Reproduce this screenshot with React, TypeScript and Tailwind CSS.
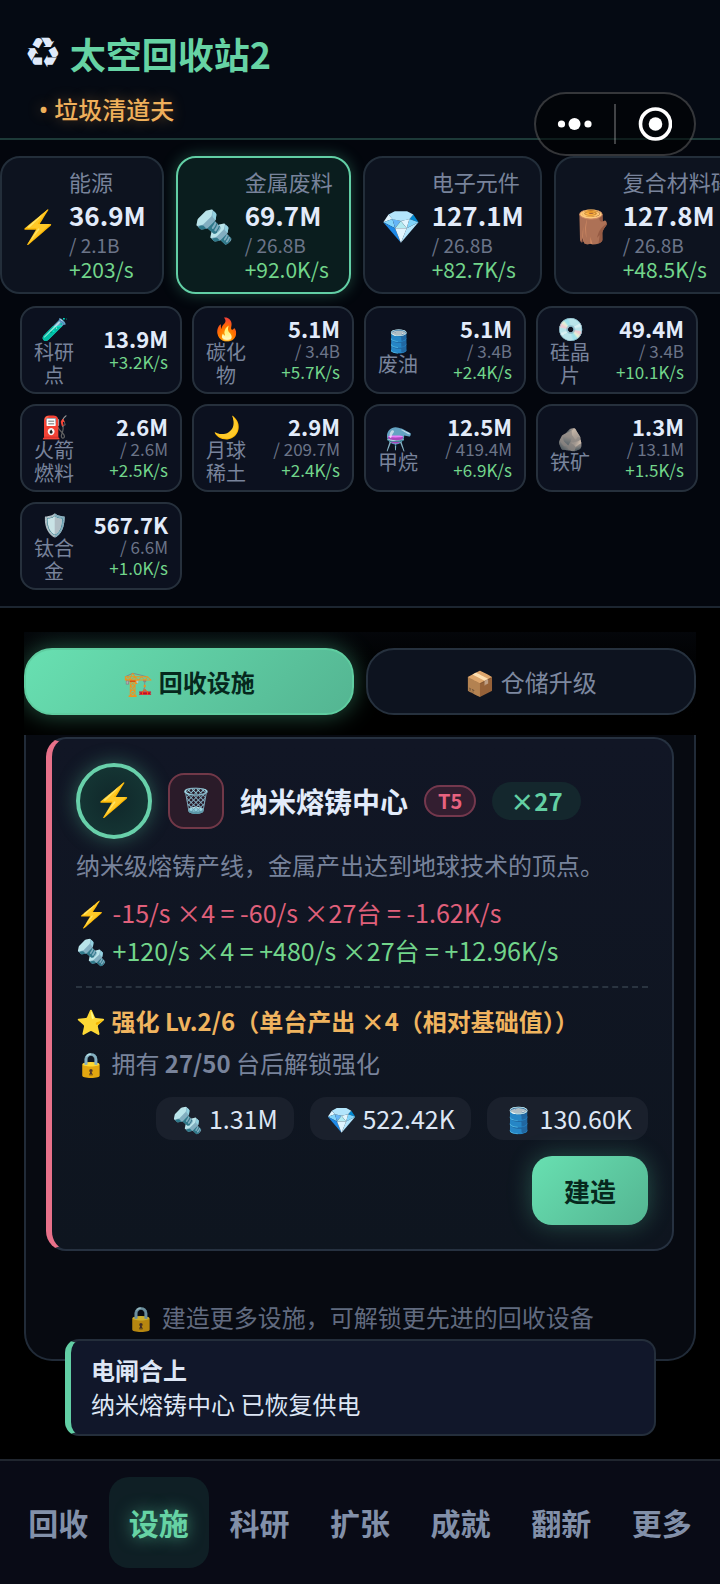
import React from 'react';

interface Resource {
  icon: string;
  name: string;
  value: string;
  cap?: string;
  rate: string;
  active?: boolean;
}

const mainResources: Resource[] = [
  { icon: '⚡', name: '能源', value: '36.9M', cap: '2.1B', rate: '+203/s' },
  { icon: '🔩', name: '金属废料', value: '69.7M', cap: '26.8B', rate: '+92.0K/s', active: true },
  { icon: '💎', name: '电子元件', value: '127.1M', cap: '26.8B', rate: '+82.7K/s' },
  { icon: '🪵', name: '复合材料碎片', value: '127.8M', cap: '26.8B', rate: '+48.5K/s' },
];

const minorResources: Resource[] = [
  { icon: '🧪', name: '科研点', value: '13.9M', rate: '+3.2K/s' },
  { icon: '🔥', name: '碳化物', value: '5.1M', cap: '3.4B', rate: '+5.7K/s' },
  { icon: '🛢️', name: '废油', value: '5.1M', cap: '3.4B', rate: '+2.4K/s' },
  { icon: '💿', name: '硅晶片', value: '49.4M', cap: '3.4B', rate: '+10.1K/s' },
  { icon: '⛽', name: '火箭燃料', value: '2.6M', cap: '2.6M', rate: '+2.5K/s' },
  { icon: '🌙', name: '月球稀土', value: '2.9M', cap: '209.7M', rate: '+2.4K/s' },
  { icon: '⚗️', name: '甲烷', value: '12.5M', cap: '419.4M', rate: '+6.9K/s' },
  { icon: '🪨', name: '铁矿', value: '1.3M', cap: '13.1M', rate: '+1.5K/s' },
  { icon: '🛡️', name: '钛合金', value: '567.7K', cap: '6.6M', rate: '+1.0K/s' },
];

const costs = [
  { icon: '🔩', amount: '1.31M' },
  { icon: '💎', amount: '522.42K' },
  { icon: '🛢️', amount: '130.60K' },
];

const navItems = ['回收', '设施', '科研', '扩张', '成就', '翻新', '更多'];

const Capsule: React.FC = () => (
  <div className="absolute right-6 top-[92px] z-20 flex h-16 w-[162px] items-center rounded-full border-2 border-white/20 bg-black/50">
    <button type="button" aria-label="菜单" className="flex h-full flex-1 items-center justify-center">
      <svg width="36" height="14" viewBox="0 0 36 14" fill="#fff">
        <circle cx="4.5" cy="7" r="3.6" />
        <circle cx="17.5" cy="7" r="6" />
        <circle cx="31" cy="7" r="3.6" />
      </svg>
    </button>
    <span className="h-10 w-0.5 bg-white/25" />
    <button type="button" aria-label="关闭" className="flex h-full flex-1 items-center justify-center">
      <svg width="34" height="34" viewBox="0 0 34 34">
        <circle cx="17.5" cy="17" r="15" fill="none" stroke="#fff" strokeWidth="3.6" />
        <circle cx="17.5" cy="17" r="6.8" fill="#fff" />
      </svg>
    </button>
  </div>
);

const MainCard: React.FC<{ item: Resource }> = ({ item }) => (
  <div
    className={`flex shrink-0 items-center gap-[11px] rounded-[20px] border-2 px-4 pt-2 pb-[10px] ${
      item.active
        ? 'border-[#62cfa5] bg-[#0a1d1e] shadow-[0_0_16px_rgba(94,220,170,0.3)]'
        : 'border-[#232e3a] bg-[#0d131f]'
    }`}
  >
    <span className="w-10 text-center text-[32px] leading-10">{item.icon}</span>
    <div className="whitespace-nowrap">
      <div className="text-[22px] leading-[30px] text-[#78839b]">{item.name}</div>
      <div className="text-[26px] leading-[38px] font-bold text-[#e2ebfa]">{item.value}</div>
      <div className="text-[19px] leading-[22px] text-[#6b7488]">/ {item.cap}</div>
      <div className="text-[21px] leading-[26px] text-[#72d58b]">{item.rate}</div>
    </div>
  </div>
);

const MinorCard: React.FC<{ item: Resource }> = ({ item }) => (
  <div className="flex h-[88px] items-center justify-between rounded-2xl border-2 border-[#26303c] bg-[#0c111f] px-3">
    <div className="w-10 text-center text-[20px] text-[#78839b]">
      <div className="flex justify-center text-[22px] leading-[26px]">{item.icon}</div>
      <div className="leading-[23px]">{item.name}</div>
    </div>
    <div className="pb-0.5 text-right whitespace-nowrap">
      <div className="text-[22px] leading-[26px] font-bold text-[#e2ebfa]">{item.value}</div>
      {item.cap && <div className="text-[17px] leading-5 text-[#6b7488]">/ {item.cap}</div>}
      <div className="text-[17px] leading-[22px] text-[#72d58b]">{item.rate}</div>
    </div>
  </div>
);

const FacilityCard: React.FC = () => (
  <article className="rounded-[20px] border-2 border-l-[6px] border-[#263140] border-l-[#e8718a] bg-linear-to-b from-[#111625] to-[#0e151f] p-6 text-[24px]">
    <div className="flex items-center gap-4">
      <button
        type="button"
        aria-label="切换供电"
        className="flex size-[76px] items-center justify-center rounded-full border-4 border-[#68d0aa] bg-radial from-[#10272a] to-[#163a37] pb-2 text-[32px] leading-none shadow-[0_0_20px_rgba(94,220,170,0.35)]"
      >
        ⚡
      </button>
      <button
        type="button"
        aria-label="拆除"
        className="flex size-14 items-center justify-center rounded-2xl border-2 border-[#713848] bg-[#2a1b29] pb-1 text-[24px] leading-none"
      >
        🗑️
      </button>
      <h2 className="text-[28px] leading-10 font-bold text-[#e2ebfa]">纳米熔铸中心</h2>
      <span className="rounded-full border-2 border-[#74384d] bg-[#331e30] px-3 text-[20px] leading-7 font-bold text-[#e8627f]">T5</span>
      <span className="rounded-full bg-[#14272d] px-[18px] text-[24px] leading-[38px] font-bold text-[#63cfa3]">×27</span>
    </div>
    <p className="mt-2 leading-9 text-[#78839b]">纳米级熔铸产线，金属产出达到地球技术的顶点。</p>
    <div className="mt-[10px] text-[25px] leading-[38px]">
      <div className="text-[#e0607b]">⚡ -15/s ×4 = -60/s ×27台 = -1.62K/s</div>
      <div className="text-[#72d58b]">🔩 +120/s ×4 = +480/s ×27台 = +12.96K/s</div>
    </div>
    <div className="mt-[17px] border-t-2 border-dashed border-[#2a3440] pt-[14px] leading-[38px]">
      <div className="font-bold text-[#f0b45f]">⭐ 强化 Lv.2/6（单台产出 ×4（相对基础值））</div>
      <div className="mt-1 text-[#78839b]">
        🔒 拥有 <b>27/50</b> 台后解锁强化
      </div>
    </div>
    <div className="mt-[15px] flex flex-wrap justify-end gap-4 text-[25px]">
      {costs.map((cost) => (
        <span key={cost.icon} className="rounded-2xl bg-[#1a202c] px-4 leading-[43px] text-[#dde6f5]">
          {cost.icon} {cost.amount}
        </span>
      ))}
    </div>
    <div className="mt-4 flex justify-end">
      <button
        type="button"
        className="rounded-[20px] bg-linear-135 from-[#68e0b1] to-[#54b592] px-8 text-[26px] leading-[69px] font-bold text-[#06281d] shadow-[0_0_24px_rgba(94,220,170,0.3)]"
      >
        建造
      </button>
    </div>
  </article>
);

export default function App() {
  return (
    <div className="relative flex min-h-screen flex-col overflow-hidden bg-black font-['Noto_Sans_CJK_SC',sans-serif]">
      {/* Header */}
      <header className="border-b-2 border-[#1d3a38] bg-[#050a13] px-6 pt-[26px] pb-[10px]">
        <h1 className="flex items-center gap-2 text-[36px] leading-[54px] font-bold text-[#66d3a4]">
          <span className="font-['DejaVu_Sans',sans-serif] text-[42px] font-normal text-[#dfe9fa]">♻︎</span>
          太空回收站2
        </h1>
        <p className="mt-[11px] pl-[15px] text-[24px] leading-9 font-medium text-[#efb05b] [text-shadow:0_0_14px_rgba(239,160,70,0.4)]">
          <span className="font-['Noto_Sans',sans-serif]">• </span>垃圾清道夫
        </p>
      </header>
      <Capsule />

      {/* Resources */}
      <section className="border-b-2 border-[#1c2530] bg-[#03060d] pt-4 pb-4">
        <div className="flex gap-3">
          {mainResources.map((item) => (
            <MainCard key={item.name} item={item} />
          ))}
        </div>
        <div className="mt-3 grid grid-cols-4 gap-[10px] pr-[22px] pl-5">
          {minorResources.map((item) => (
            <MinorCard key={item.name} item={item} />
          ))}
        </div>
      </section>

      {/* Facilities */}
      <main className="flex-1 px-6 pt-6 pb-[98px]">
        <div className="grid grid-cols-2 gap-3 overflow-hidden bg-linear-to-b from-[#04060a] to-black pt-4 pb-5 text-[24px]">
          <button
            type="button"
            className="rounded-[28px] border-2 border-[#5fcda0] bg-linear-135 from-[#68e0b1] to-[#54b592] leading-[63px] font-bold text-[#06281d] shadow-[0_0_24px_rgba(94,220,170,0.4)]"
          >
            🏗️ 回收设施
          </button>
          <button
            type="button"
            className="rounded-[28px] border-2 border-[#26313e] bg-[#0d131f] leading-[63px] text-[#7d889f]"
          >
            📦 仓储升级
          </button>
        </div>
        <section className="rounded-b-[28px] border-2 border-t-0 border-[#212b38] bg-[#070a11] px-5 pt-0.5 pb-6">
          <FacilityCard />
          <p className="mt-12 text-center text-[24px] leading-9 text-[#78839b] opacity-80">
            🔒 建造更多设施，可解锁更先进的回收设备
          </p>
        </section>
      </main>

      {/* Toast */}
      <div
        role="status"
        className="absolute right-16 bottom-[148px] left-[65px] rounded-[14px] border-2 border-l-[6px] border-[#242e3b] border-l-[#62cfa5] bg-[#11172a] px-5 pt-3 pb-[13px] text-[24px] leading-[34px] text-[#dde6f5]"
      >
        <div className="font-bold">电闸合上</div>
        <div>纳米熔铸中心 已恢复供电</div>
      </div>

      {/* Bottom navigation */}
      <nav className="flex border-t-2 border-[#20262f] bg-[#090b16] px-2 py-4">
        {navItems.map((label, i) => (
          <button
            key={label}
            type="button"
            className={`flex-1 rounded-[20px] text-[30px] leading-[91px] font-bold ${
              i === 1
                ? 'bg-[#0f1f25] text-[#66d3a4] [text-shadow:0_0_16px_rgba(94,220,170,0.6)]'
                : 'text-[#8290a9]'
            }`}
          >
            {label}
          </button>
        ))}
      </nav>
    </div>
  );
}
